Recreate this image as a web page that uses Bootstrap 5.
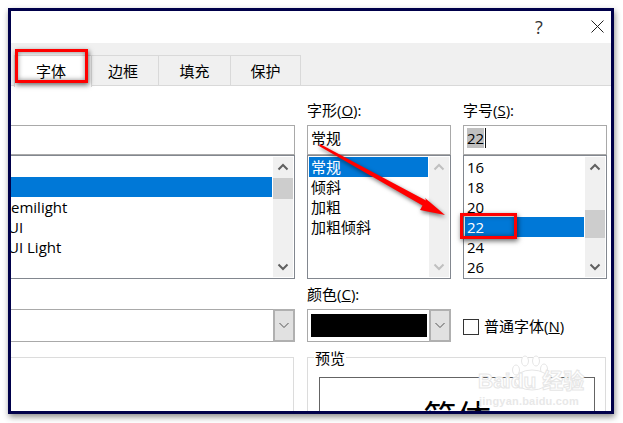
<!DOCTYPE html>
<html lang="zh">
<head>
<meta charset="utf-8">
<title>字体</title>
<link href="https://cdn.jsdelivr.net/npm/bootstrap@5.3.0/dist/css/bootstrap.min.css" rel="stylesheet">
<style>
html,body{margin:0;height:423px;overflow:hidden;background:#fff}
body{font:15px/20px "Open Sans","Noto Sans CJK SC",sans-serif;color:#000}
.page{width:623px;height:423px;padding:8px 9px 9px 8px}
.win{height:406px;border:3px solid #00004a;box-shadow:1px 3px 6px rgba(0,0,0,.45);background:#fff;overflow:hidden}
.titlebar{height:32px;padding-right:7px}
.qm{font-size:18px;width:20px;text-align:center;margin-right:42px;color:#333;margin-top:-1px}
.closeic{width:13px;height:13px;display:block;margin-top:-1px}
.tabstrip{height:43px;background:#f0f0f0;border-bottom:1px solid #d9d9d9;padding:12px 0 0 3px}
.tabx{height:31px;border:1px solid #d9d9d9;border-bottom:0;border-left:0;line-height:30px;text-align:center}
.tabx.on{background:#fff;width:78px;border-left:1px solid #d9d9d9;height:32px;padding-right:4px}
.t2{width:67px;padding-right:4px}.t3{width:72px}.t4{width:70px}
.tabbody{padding:15px 4px 0 0}
.colgap{column-gap:12px}
.colf{width:284px}.cols{width:144px}
.lbl{height:24px;line-height:18px}
.fld{height:30px;border:1px solid #a9a9a9;padding:2px 3px;line-height:20px}
.colf .fld{border-left:0;padding:0}
.sel{background:#c0c0c0;display:inline-block;height:20px;line-height:20px}
.caret{display:inline-block;width:1px;height:20px;background:#111;vertical-align:top;margin-left:1px}
.lst{height:124px;border:1px solid #82878f;padding:1px}
.colf .lst{border-left:0;padding-left:0}
.rows{line-height:20px}
.rowi{height:20px;padding-left:2px;white-space:nowrap;overflow:hidden}
.colf .rowi{padding-left:0}
.cutu{display:block;margin-left:-3px}
.rowi.act{background:#0078d7;color:#fff}
.sb{width:20px;background:#f0f0f0;margin-left:1px}
.sbb{height:20px}
.sbb svg{width:12px;height:8px;display:block}
.thumb{background:#cdcdcd}
.th1{margin-top:1px;height:21px}
.th3{margin-top:33px;height:28px}
.lbl2{margin-top:5px;height:25px;line-height:20px}
.combo{height:33px;border:1px solid #a9a9a9}
.colf .combo{border-left:0}
.cbtn{width:22px;background:#e1e1e1;border:2px solid #b0b0b0;margin:-1px}
.cbtn svg{width:12px;height:7px;display:block}
.swatch{background:#000;margin:4px 3px 4px 3px}
.chkrow{height:31px;margin-top:31px}
.boxc{width:16px;height:16px;border:1px solid #333;background:#fff;margin-right:5px;margin-top:2px}
.bottomrow{margin-top:15px}
.groupb{border:1px solid #dcdcdc;border-bottom:0;height:80px}
.gl{width:283px;margin-right:1px;border-left:0}
.gr{margin-right:1px}
.legendx{margin:-10px 0 0 6px;padding:0 1px;width:max-content;background:#fff;height:20px;line-height:20px}
.pvbox{border:1px solid #646464;border-bottom:0;margin:9px 10px 0 11px;height:60px;font-size:34px;line-height:1;padding-top:22px;text-align:center;white-space:nowrap}
.mark1,.mark2{position:absolute;border:3px solid #f00;box-shadow:1px 2px 5px rgba(0,0,0,.6),inset 0 0 5px rgba(0,0,0,.45)}
.mark1{left:15px;top:49px;width:73px;height:34px}
.mark2{left:460px;top:213px;width:57px;height:26px}
.arrow{position:absolute;left:0;top:0;width:623px;height:423px;filter:drop-shadow(1px 2px 2px rgba(0,0,0,.55))}
.wm{position:absolute;left:478px;top:350px;width:110px;height:60px;color:#fff;pointer-events:none}
.wm svg{position:absolute;left:32px;top:5px;width:44px;height:36px}
.wmt{position:absolute;left:0;top:19px;font:bold 21px/24px "Liberation Sans","Noto Sans CJK SC",sans-serif;-webkit-text-stroke:1px #e6e6e6;white-space:nowrap}
.wmu{position:absolute;left:1px;top:44px;font:bold 11px/14px "Liberation Sans",sans-serif;color:#e8e8e8;white-space:nowrap;letter-spacing:.2px}
</style>
</head>
<body>
<div class="page position-relative">
  <div class="win d-flex flex-column">
    <div class="titlebar d-flex justify-content-end align-items-center flex-shrink-0">
      <span class="qm">?</span>
      <svg class="closeic" viewBox="0 0 13 13"><path d="M.5.5l12 12M12.500.5l-12 12" stroke="#222" stroke-width="1" fill="none"/></svg>
    </div>
    <div class="tabstrip d-flex flex-shrink-0">
      <div class="tabx on">字体</div>
      <div class="tabx t2">边框</div>
      <div class="tabx t3">填充</div>
      <div class="tabx t4">保护</div>
    </div>
    <div class="tabbody d-flex flex-column flex-grow-1">
      <div class="d-flex colgap">
        <div class="colf d-flex flex-column flex-shrink-0">
          <div class="lbl">&nbsp;</div>
          <div class="fld"></div>
          <div class="lst d-flex">
            <div class="rows flex-grow-1">
              <div class="rowi"></div>
              <div class="rowi act"></div>
              <div class="rowi">emilight</div>
              <div class="rowi"><span class="cutu">UI</span></div>
              <div class="rowi"><span class="cutu">UI Light</span></div>
            </div>
            <div class="sb d-flex flex-column flex-shrink-0">
              <div class="sbb d-flex align-items-center justify-content-center"><svg viewBox="0 0 12 8"><path d="M1.500 6.500L6 2l4.500 4.500" stroke="#606060" stroke-width="2" fill="none"/></svg></div>
              <div class="flex-grow-1"><div class="thumb th1"></div></div>
              <div class="sbb d-flex align-items-center justify-content-center"><svg viewBox="0 0 12 8"><path d="M1.500 1.500L6 6l4.500-4.500" stroke="#606060" stroke-width="2" fill="none"/></svg></div>
            </div>
          </div>
          <div class="lbl2">&nbsp;</div>
          <div class="combo d-flex">
            <div class="flex-grow-1"></div>
            <div class="cbtn d-flex align-items-center justify-content-center"><svg viewBox="0 0 12 7"><path d="M1.500 1L6 5.500 10.500 1" stroke="#555" stroke-width="1" fill="none"/></svg></div>
          </div>
        </div>
        <div class="cols d-flex flex-column flex-shrink-0">
          <div class="lbl">字形(<u>O</u>):</div>
          <div class="fld">常规</div>
          <div class="lst d-flex">
            <div class="rows flex-grow-1">
              <div class="rowi act">常规</div>
              <div class="rowi">倾斜</div>
              <div class="rowi">加粗</div>
              <div class="rowi">加粗倾斜</div>
            </div>
            <div class="sb d-flex flex-column flex-shrink-0">
              <div class="sbb d-flex align-items-center justify-content-center"><svg viewBox="0 0 12 8"><path d="M1.500 6.500L6 2l4.500 4.500" stroke="#c0c0c0" stroke-width="2" fill="none"/></svg></div>
              <div class="flex-grow-1"></div>
              <div class="sbb d-flex align-items-center justify-content-center"><svg viewBox="0 0 12 8"><path d="M1.500 1.500L6 6l4.500-4.500" stroke="#c0c0c0" stroke-width="2" fill="none"/></svg></div>
            </div>
          </div>
          <div class="lbl2">颜色(<u>C</u>):</div>
          <div class="combo d-flex">
            <div class="swatch flex-grow-1"></div>
            <div class="cbtn d-flex align-items-center justify-content-center"><svg viewBox="0 0 12 7"><path d="M1.500 1L6 5.500 10.500 1" stroke="#555" stroke-width="1" fill="none"/></svg></div>
          </div>
        </div>
        <div class="cols d-flex flex-column flex-shrink-0">
          <div class="lbl">字号(<u>S</u>):</div>
          <div class="fld"><span class="sel">22</span><span class="caret"></span></div>
          <div class="lst d-flex">
            <div class="rows flex-grow-1">
              <div class="rowi">16</div>
              <div class="rowi">18</div>
              <div class="rowi">20</div>
              <div class="rowi act">22</div>
              <div class="rowi">24</div>
              <div class="rowi">26</div>
            </div>
            <div class="sb d-flex flex-column flex-shrink-0">
              <div class="sbb d-flex align-items-center justify-content-center"><svg viewBox="0 0 12 8"><path d="M1.500 6.500L6 2l4.500 4.500" stroke="#606060" stroke-width="2" fill="none"/></svg></div>
              <div class="flex-grow-1"><div class="thumb th3"></div></div>
              <div class="sbb d-flex align-items-center justify-content-center"><svg viewBox="0 0 12 8"><path d="M1.500 1.500L6 6l4.500-4.500" stroke="#606060" stroke-width="2" fill="none"/></svg></div>
            </div>
          </div>
          <div class="chkrow d-flex align-items-center">
            <span class="boxc flex-shrink-0"></span>
            <span>普通字体(<u>N</u>)</span>
          </div>
        </div>
      </div>
      <div class="bottomrow d-flex colgap">
        <div class="groupb gl flex-shrink-0"></div>
        <div class="groupb gr flex-grow-1">
          <div class="legendx">预览</div>
          <div class="pvbox">简体</div>
        </div>
      </div>
    </div>
  </div>
  <div class="mark1"></div>
  <div class="mark2"></div>
  <svg class="arrow" viewBox="0 0 623 423"><polygon points="320,144 426,200.500 425,198 445,215 420,210 422.500,205.500 319,146" fill="#f00"/></svg>
  <div class="wm">
    <svg viewBox="0 0 44 36"><g fill="#fff" stroke="#e6e6e6"><ellipse cx="6" cy="15" rx="3.500" ry="5"/><ellipse cx="15" cy="6" rx="3.500" ry="5"/><ellipse cx="26" cy="6" rx="3.500" ry="5"/><ellipse cx="34" cy="14" rx="3.500" ry="5"/><ellipse cx="22" cy="25" rx="17" ry="10"/></g></svg>
    <div class="wmt">Baidu 经验</div>
    <div class="wmu">jingyan.baidu.com</div>
  </div>
</div>
</body>
</html>
